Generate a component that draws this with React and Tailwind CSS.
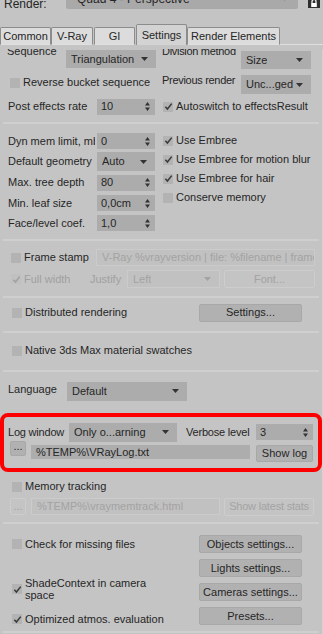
import React from "react";

const Arrow = ({ disabled, light }) => (
  <svg width="7" height="4" viewBox="0 0 7 4" className="shrink-0">
    <path d="M0 0H7L3.5 4Z" fill={disabled ? "#a3a3a3" : light ? "#8a8a8a" : "#333"} />
  </svg>
);

const SpinArrows = () => (
  <svg width="5" height="9" viewBox="0 0 5 9" className="shrink-0">
    <path d="M0 3.5L2.5 0L5 3.5Z M0 5.5L2.5 9L5 5.5Z" fill="#333" />
  </svg>
);

const Dropdown = ({ value, className = "", disabled }) => (
  <div
    className={`flex items-center justify-between pl-[5px] pr-[8px] ${
      disabled ? "bg-[#c1c1c1] border border-[#cbcbcb] text-[#a3a3a3]" : "bg-[#acacac]"
    } ${className}`}
  >
    <span className="truncate">{value}</span>
    <Arrow disabled={disabled} />
  </div>
);

const Spinner = ({ value, className = "" }) => (
  <div className={`flex items-center justify-between pl-[4px] pr-[5px] bg-[#acacac] ${className}`}>
    <span>{value}</span>
    <SpinArrows />
  </div>
);

const Check = ({ checked, disabled, label, className = "", labelClass = "" }) => (
  <div className={`flex items-center ${className}`}>
    <span
      className={`w-[10px] h-[10px] flex items-center justify-center shrink-0 ${
        disabled ? "bg-[#c0c0c0]" : "bg-[#b3b3b3]"
      }`}
    >
      {checked && (
        <svg width="9" height="9" viewBox="0 0 10 10">
          <path
            d="M1.5 5.3L3.8 7.8L8.6 1.8"
            fill="none"
            stroke={disabled ? "#a0a0a0" : "#3a3a3a"}
            strokeWidth="1.7"
          />
        </svg>
      )}
    </span>
    <span className={`ml-[3px] ${disabled ? "text-[#a0a0a0]" : ""} ${labelClass}`}>{label}</span>
  </div>
);

const Btn = ({ children, className = "", disabled }) => (
  <div
    className={`flex items-center justify-center rounded-[2px] whitespace-nowrap ${
      disabled ? "border border-[#cdcdcd] text-[#a3a3a3]" : "bg-[#b1b1b1] border border-[#a8a8a8]"
    } ${className}`}
  >
    {children}
  </div>
);

const Sep = ({ className = "" }) => <div className={`mx-[3px] h-[2px] bg-[#cfcfcf] ${className}`} />;

const Tab = ({ label, active, className = "" }) => (
  <div
    className={`flex items-center justify-center rounded-t-[2px] border border-[#8c8c8c] ${
      active ? "h-[21px] bg-[#d3d3d3] border-b-0" : "h-[18px] bg-[#dcdcdc] border-b-[#e0e0e0]"
    } ${className}`}
  >
    {label}
  </div>
);

export default function App() {
  return (
    <div className="w-[323px] h-[634px] overflow-hidden flex flex-col bg-[#c4c4c4] text-[#262626] text-[11px] leading-[13px] font-['Liberation_Sans',Arial,sans-serif]">
      {/* Render selector, scrolled off the top */}
      <div className="flex items-start h-[22px] -mt-[12px] shrink-0">
        <span className="ml-[4px] w-[62px] mt-[10px] text-[12px]">Render:</span>
        <div className="mt-[1px] w-[232px] h-[20px] bg-[#a9a9a9] rounded-[2px] flex items-center justify-between pl-[11px] pr-[10px] text-[12px]">
          <span>Quad 4 - Perspective</span>
          <Arrow light />
        </div>
        <svg width="12" height="9" viewBox="0 0 12 9" className="ml-[10px] mt-[11px]">
          <rect width="12" height="9" fill="#2e2e2e" />
          <path d="M4 4V2.5a2 2 0 0 1 4 0V4" fill="none" stroke="#fff" strokeWidth="1.2" />
          <rect x="3.2" y="4" width="5.6" height="4" fill="#fff" />
        </svg>
      </div>

      {/* Tabs */}
      <div className="flex items-end h-[21px] mt-[14px] shrink-0 text-[11px]">
        <Tab label="Common" className="w-[51px]" />
        <Tab label="V-Ray" className="w-[42px]" />
        <Tab label="GI" className="w-[41px] ml-[1px]" />
        <Tab label="Settings" active className="w-[51px] ml-[1px]" />
        <Tab label="Render Elements" className="w-[93px]" />
        <div className="flex-1 h-px bg-[#e0e0e0]" />
      </div>

      {/* Panel */}
      <div className="flex-1 min-h-0 mt-[4px] overflow-hidden flex flex-col border-r border-[#d2d2d2]">
        {/* Sequence */}
        <div className="flex items-start h-[26px] -mt-[4px] shrink-0">
          <span className="ml-[7px] w-[59px]">Sequence</span>
          <Dropdown value="Triangulation" className="mt-[5px] w-[90px] h-[18px]" />
          <span className="ml-[6px] w-[79px] whitespace-nowrap tracking-[-0.3px]">Division method</span>
          <Dropdown value="Size" className="mt-[6px] w-[70px] h-[18px]" />
        </div>

        <div className="flex items-start h-[26px] shrink-0">
          <Check label="Reverse bucket sequence" className="ml-[10px] mt-[5px] h-[13px] w-[152px]" />
          <span className="mt-[3px] w-[79px] whitespace-nowrap tracking-[-0.3px]">Previous render</span>
          <Dropdown value="Unc...ged" className="mt-[4px] w-[70px] h-[19px]" />
        </div>

        <div className="flex items-center h-[19px] shrink-0">
          <span className="ml-[8px] w-[89px]">Post effects rate</span>
          <Spinner value="10" className="w-[58px] h-[16px]" />
          <Check checked label="Autoswitch to effectsResult" className="ml-[8px]" />
        </div>

        <Sep className="mt-[6px]" />

        {/* Geometry */}
        <div className="flex mt-[7px] shrink-0">
          <div className="w-[155px] flex flex-col">
            <div className="flex items-center h-[20px]">
              <span className="ml-[8px] w-[87px] mr-[2px] overflow-hidden whitespace-nowrap">Dyn mem limit, mb</span>
              <Spinner value="0" className="w-[58px] h-[16px]" />
            </div>
            <div className="flex items-center h-[21px]">
              <span className="ml-[8px] w-[89px] whitespace-nowrap">Default geometry</span>
              <Dropdown value="Auto" className="w-[58px] h-[19px]" />
            </div>
            <div className="flex items-center h-[21px]">
              <span className="ml-[8px] w-[89px] whitespace-nowrap">Max. tree depth</span>
              <Spinner value="80" className="w-[58px] h-[16px]" />
            </div>
            <div className="flex items-center h-[20px]">
              <span className="ml-[8px] w-[89px] whitespace-nowrap">Min. leaf size</span>
              <Spinner value="0,0cm" className="w-[58px] h-[16px]" />
            </div>
            <div className="flex items-center h-[20px]">
              <span className="ml-[8px] w-[89px] whitespace-nowrap">Face/level coef.</span>
              <Spinner value="1,0" className="w-[58px] h-[16px]" />
            </div>
          </div>
          <div className="ml-[8px] flex flex-col">
            <Check checked label="Use Embree" className="h-[19px]" />
            <Check checked label="Use Embree for motion blur" className="h-[19px]" />
            <Check checked label="Use Embree for hair" className="h-[19px]" />
            <Check label="Conserve memory" className="h-[19px]" />
          </div>
        </div>

        <Sep className="mt-[6px]" />

        {/* Frame stamp */}
        <div className="flex items-center h-[19px] mt-[7px] shrink-0">
          <Check label="Frame stamp" className="ml-[11px] w-[85px]" />
          <div className="w-[219px] h-[17px] bg-[#c1c1c1] border border-[#cbcbcb] text-[#a3a3a3] pl-[5px] flex items-center overflow-hidden whitespace-nowrap">
            V-Ray %vrayversion | file: %filename | frame: %frame | primitives: %primitives
          </div>
        </div>
        <div className="flex items-center h-[20px] mt-[2px] shrink-0">
          <Check checked disabled label="Full width" className="ml-[11px] w-[79px]" />
          <span className="w-[37px] text-[#a0a0a0]">Justify</span>
          <Dropdown disabled value="Left" className="w-[93px] h-[18px]" />
          <Btn disabled className="ml-[4px] w-[91px] h-[18px]">
            Font...
          </Btn>
        </div>

        <Sep className="mt-[7px]" />

        <div className="flex items-center h-[19px] mt-[5px] shrink-0">
          <Check label="Distributed rendering" className="ml-[12px] w-[187px]" />
          <Btn className="w-[103px] h-[18px]">Settings...</Btn>
        </div>

        <Sep className="mt-[9px]" />

        <div className="flex items-center h-[19px] mt-[8px] shrink-0">
          <Check label="Native 3ds Max material swatches" className="ml-[12px]" />
        </div>

        <Sep className="mt-[10px]" />

        <div className="flex items-center h-[20px] mt-[9px] shrink-0">
          <span className="ml-[8px] w-[59px] mb-[3px]">Language</span>
          <Dropdown value="Default" className="w-[120px] h-[19px]" />
        </div>

        {/* Log window, highlighted */}
        <div className="mt-[12px] w-[322px] h-[59px] border-[4px] border-[#ff0000] rounded-[8px] flex flex-col shrink-0">
          <div className="flex items-center h-[22px] mt-[4px]">
            <span className="ml-[4px] w-[61px] whitespace-nowrap tracking-[-0.2px]">Log window</span>
            <Dropdown value="Only o...arning" className="w-[108px] h-[19px]" />
            <span className="ml-[9px] w-[70px] whitespace-nowrap tracking-[-0.2px]">Verbose level</span>
            <Spinner value="3" className="w-[57px] h-[16px]" />
          </div>
          <div className="flex items-start h-[20px]">
            <Btn className="ml-[6px] -mt-[2px] w-[16px] h-[15px] leading-[8px] items-start">...</Btn>
            <div className="ml-[5px] mt-[2px] w-[219px] h-[14px] bg-[#adadad] pl-[5px] flex items-center whitespace-nowrap">
              {"%TEMP%\\VRayLog.txt"}
            </div>
            <Btn className="ml-[6px] mt-[2px] w-[57px] h-[17px]">Show log</Btn>
          </div>
        </div>

        <div className="flex items-center h-[19px] mt-[5px] shrink-0">
          <Check label="Memory tracking" className="ml-[12px]" />
        </div>
        <div className="flex items-center h-[19px] mt-[1px] shrink-0">
          <Btn disabled className="ml-[10px] w-[16px] h-[17px]">
            ...
          </Btn>
          <div className="ml-[5px] w-[189px] h-[17px] bg-[#c1c1c1] border border-[#cbcbcb] text-[#a3a3a3] pl-[5px] flex items-center whitespace-nowrap overflow-hidden">
            {"%TEMP%\\vraymemtrack.html"}
          </div>
          <Btn disabled className="ml-[4px] w-[90px] h-[18px] tracking-[-0.2px]">
            Show latest stats
          </Btn>
        </div>

        <Sep className="mt-[6px]" />

        <div className="flex mt-[11px] shrink-0">
          <div className="w-[199px] flex flex-col">
            <Check label="Check for missing files" className="ml-[12px] h-[18px]" />
            <Check
              checked
              label="ShadeContext in camera space"
              className="ml-[12px] mt-[24px] h-[24px]"
              labelClass="w-[135px] leading-[12px]"
            />
            <Check checked label="Optimized atmos. evaluation" className="ml-[12px] mt-[9px] h-[18px] whitespace-nowrap" />
          </div>
          <div className="flex flex-col gap-[6px]">
            <Btn className="w-[103px] h-[18px]">Objects settings...</Btn>
            <Btn className="w-[103px] h-[18px]">Lights settings...</Btn>
            <Btn className="w-[103px] h-[18px]">Cameras settings...</Btn>
            <Btn className="w-[103px] h-[18px]">Presets...</Btn>
          </div>
        </div>

        <Sep className="mt-[3px]" />
      </div>
    </div>
  );
}
